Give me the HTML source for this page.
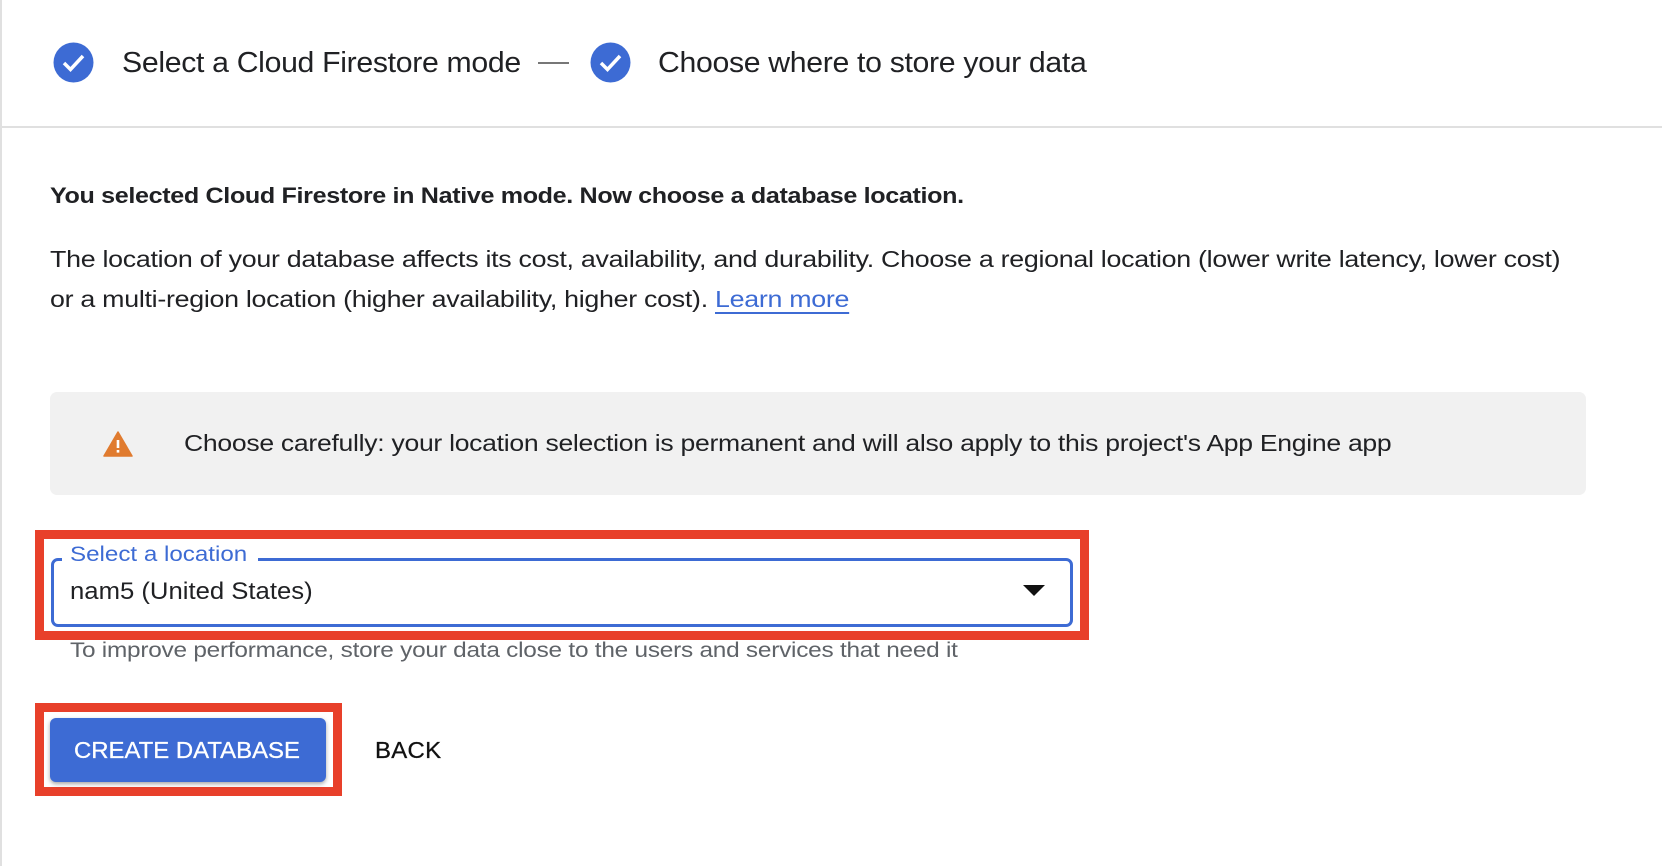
<!DOCTYPE html>
<html><head><meta charset="utf-8"><style>
*{margin:0;padding:0;box-sizing:border-box}
html,body{width:1662px;height:866px;background:#fff;overflow:hidden;font-family:"Liberation Sans",Arial,sans-serif;color:#202124}
.abs{position:absolute;white-space:nowrap;transform-origin:0 50%}
</style></head><body>
<div style="position:absolute;left:0;top:0;width:2px;height:866px;background:#e0e0e0"></div>
<div style="position:absolute;left:0;top:126px;width:1662px;height:2px;background:#e0e0e0"></div>

<svg class="abs" style="left:53px;top:42px" width="41" height="41" viewBox="0 0 41 41"><circle cx="20.5" cy="20.5" r="20" fill="#3d6bd4"/><path d="M11 21l6.5 6.5L30 14" stroke="#fff" stroke-width="3.5" fill="none"/></svg>
<div class="abs" style="left:122px;top:46px;font-size:28.5px;line-height:34px;letter-spacing:-0.3px;transform:scaleX(1.06)">Select a Cloud Firestore mode</div>
<div class="abs" style="left:538px;top:62px;width:31px;height:2px;background:#777"></div>
<svg class="abs" style="left:590px;top:42px" width="41" height="41" viewBox="0 0 41 41"><circle cx="20.5" cy="20.5" r="20" fill="#3d6bd4"/><path d="M11 21l6.5 6.5L30 14" stroke="#fff" stroke-width="3.5" fill="none"/></svg>
<div class="abs" style="left:658px;top:46px;font-size:28.5px;line-height:34px;letter-spacing:-0.3px;transform:scaleX(1.06)">Choose where to store your data</div>

<div class="abs" style="left:50px;top:182px;font-size:22.5px;font-weight:bold;line-height:28px;letter-spacing:-0.3px;transform:scaleX(1.115)">You selected Cloud Firestore in Native mode. Now choose a database location.</div>
<div class="abs" style="left:50px;top:245px;font-size:23.5px;line-height:28px;letter-spacing:-0.25px;transform:scaleX(1.14)">The location of your database affects its cost, availability, and durability. Choose a regional location (lower write latency, lower cost)</div>
<div class="abs" style="left:50px;top:285px;font-size:23.5px;line-height:28px;letter-spacing:-0.25px;transform:scaleX(1.14)">or a multi-region location (higher availability, higher cost). <span style="color:#3d6bd4;text-decoration:underline;text-underline-offset:5px">Learn more</span></div>

<div style="position:absolute;left:50px;top:392px;width:1536px;height:103px;background:#f1f1f1;border-radius:7px"></div>
<svg class="abs" style="left:103px;top:431px" width="30" height="26" viewBox="0 0 30 26"><path d="M15 1L29 25H1Z" fill="#e07b2f" stroke="#e07b2f" stroke-width="1.5" stroke-linejoin="round"/><rect x="13.7" y="9" width="2.6" height="8" fill="#fff"/><rect x="13.7" y="19" width="2.6" height="2.6" fill="#fff"/></svg>
<div class="abs" style="left:184px;top:429px;font-size:23.5px;line-height:28px;letter-spacing:-0.25px;transform:scaleX(1.13)">Choose carefully: your location selection is permanent and will also apply to this project's App Engine app</div>

<div style="position:absolute;left:35px;top:530px;width:1054px;height:110px;border:9px solid #e8402a"></div>
<div style="position:absolute;left:51px;top:558px;width:1022px;height:69px;border:3.5px solid #3d6bd4;border-radius:7px"></div>
<div style="position:absolute;left:62px;top:545px;width:196px;height:20px;background:#fff"></div>
<div class="abs" style="left:70px;top:542px;font-size:21px;line-height:26px;color:#3d6bd4;transform:scaleX(1.15)">Select a location</div>
<div class="abs" style="left:70px;top:578px;font-size:24px;line-height:28px;transform:scaleX(1.07)">nam5 (United States)</div>
<svg class="abs" style="left:1023px;top:585px" width="22" height="12" viewBox="0 0 22 12"><path d="M0 0H22L11 11Z" fill="#111"/></svg>
<div class="abs" style="left:70px;top:638px;font-size:21px;line-height:26px;color:#5f6368;letter-spacing:-0.2px;transform:scaleX(1.16)">To improve performance, store your data close to the users and services that need it</div>

<div style="position:absolute;left:35px;top:703px;width:307px;height:93px;border:9px solid #e8402a"></div>
<div style="position:absolute;left:50px;top:718px;width:276px;height:64px;background:#3d6bd4;border-radius:6px;box-shadow:0 2px 4px rgba(0,0,0,.35)"></div>
<div class="abs" style="left:74px;top:736px;font-size:23px;line-height:28px;color:#fff;transform:scaleX(1.04);-webkit-text-stroke:0.3px #fff">CREATE DATABASE</div>
<div class="abs" style="left:375px;top:736px;font-size:23px;line-height:28px;color:#111;letter-spacing:0.3px;transform:scaleX(1.04);-webkit-text-stroke:0.3px #111">BACK</div>
</body></html>
